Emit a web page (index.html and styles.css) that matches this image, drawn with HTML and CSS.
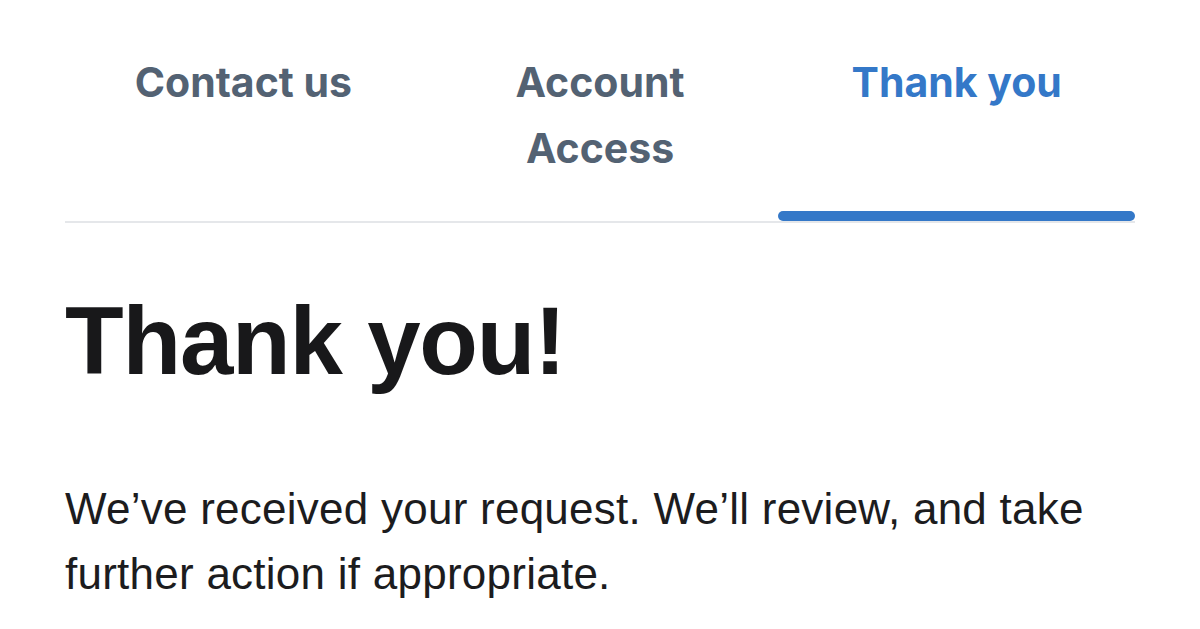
FILE: index.html
```html
<!DOCTYPE html>
<html lang="en">
<head>
<meta charset="utf-8">
<title>Thank you</title>
<link rel="stylesheet" href="styles.css">
</head>
<body>
<main class="page">
  <nav class="tabs">
    <div class="tab">Contact us</div>
    <div class="tab">Account<br>Access</div>
    <div class="tab tab-active">Thank you</div>
  </nav>
  <section class="content">
    <h1 class="title">Thank you!</h1>
    <p class="message">We’ve received your request. We’ll review, and take further action if appropriate.</p>
  </section>
</main>
</body>
</html>
```

FILE: styles.css
```css
html, body {
  margin: 0;
  padding: 0;
  background: #ffffff;
}

.page {
  padding: 0 65px;
}

.tabs {
  display: flex;
  border-bottom: 2px solid #e5e7ea;
  padding-top: 49px;
}

.tab {
  flex: 1;
  position: relative;
  text-align: center;
  font-family: Inter, "Noto Sans", sans-serif;
  font-weight: 700;
  font-size: 41px;
  line-height: 66px;
  color: #536273;
  padding-bottom: 40px;
}

.tab-active {
  color: #3478c8;
}

.tab-active::after {
  content: "";
  position: absolute;
  left: 0;
  right: 0;
  bottom: 0;
  height: 10px;
  border-radius: 5px;
  background: #3478c8;
}

.content {
  padding-top: 63px;
}

.title {
  margin: 0;
  font-family: "Liberation Sans", Arial, sans-serif;
  font-weight: 700;
  font-size: 96px;
  line-height: 110px;
  letter-spacing: -1.2px;
  color: #18181a;
}

.message {
  margin: 80px 0 0;
  font-family: "Liberation Sans", Arial, sans-serif;
  font-size: 44px;
  line-height: 65px;
  letter-spacing: 0.25px;
  color: #1c1c1e;
}
```
